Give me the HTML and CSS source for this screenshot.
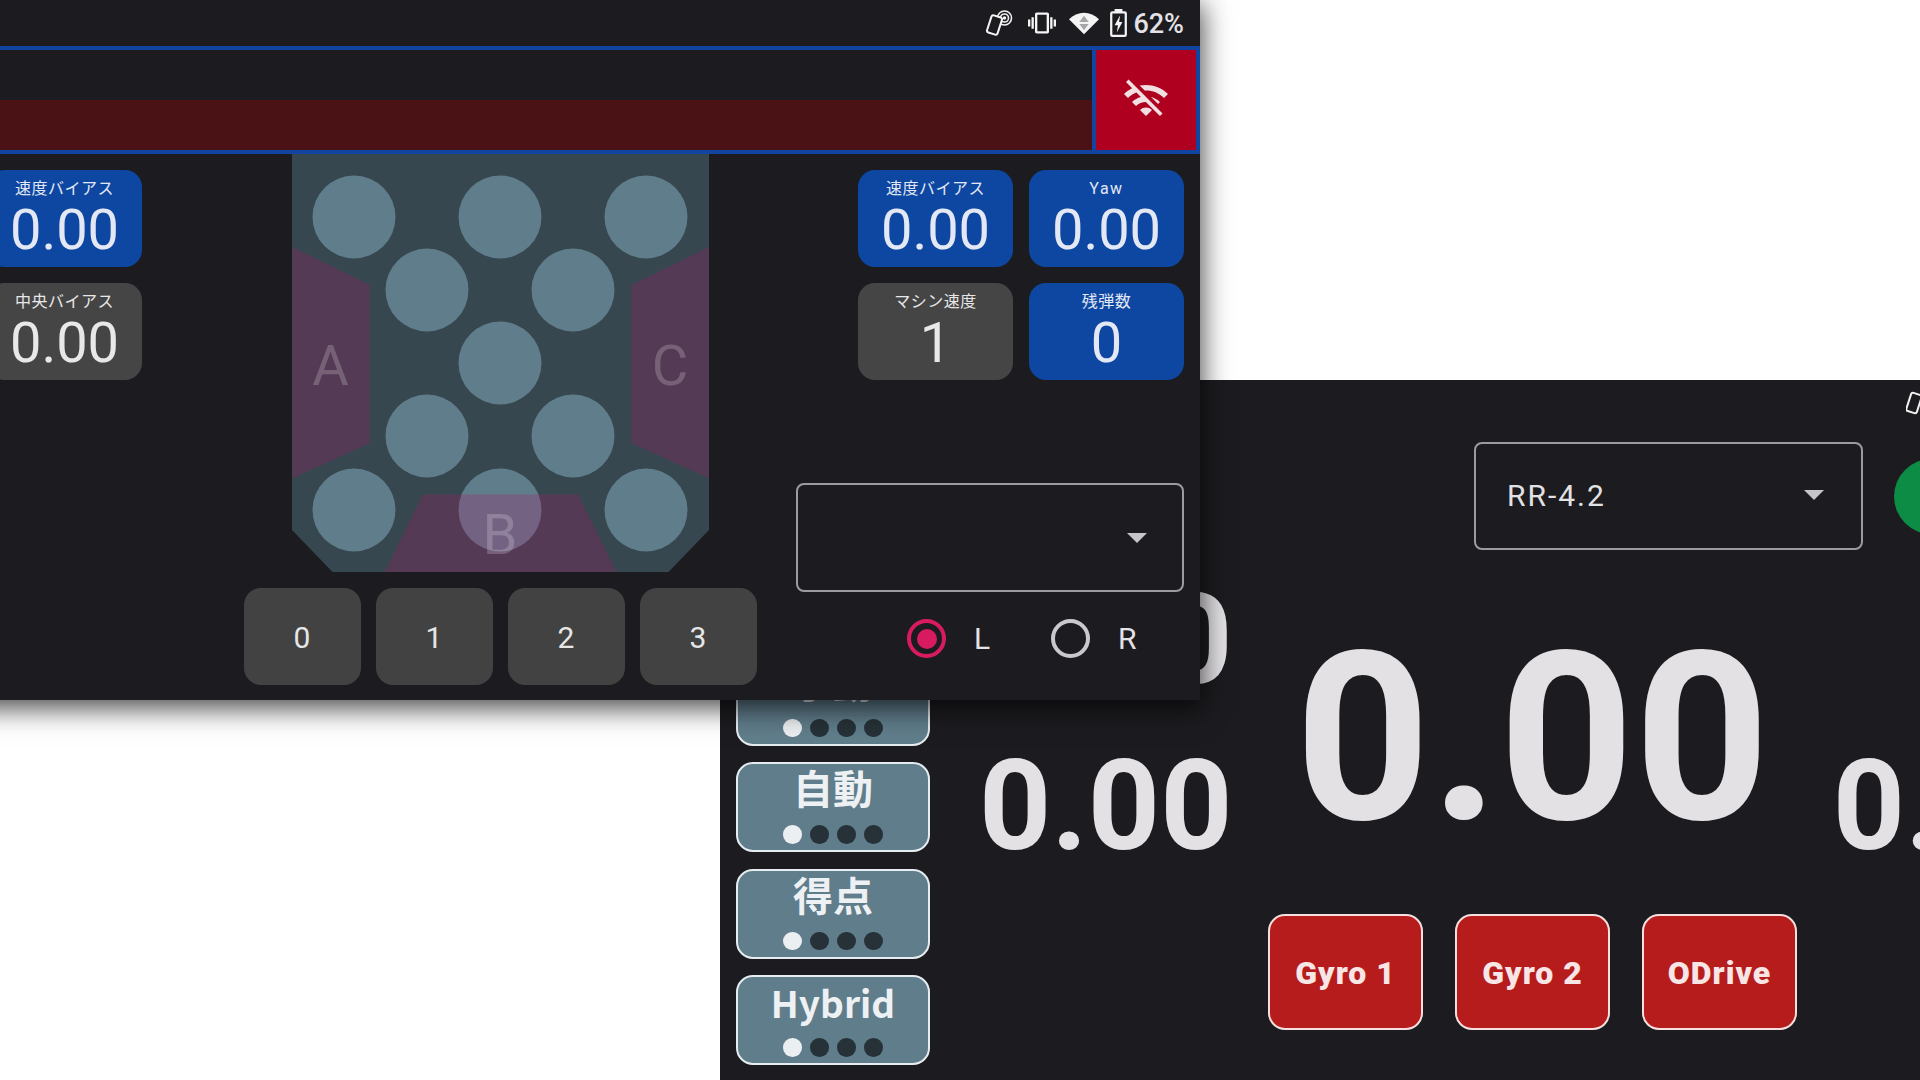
FILE: index.html
```html
<!DOCTYPE html>
<html lang="ja">
<head>
<meta charset="utf-8">
<title>Robot controller</title>
<link rel="stylesheet" href="styles.css">
</head>
<body>
<main class="desk">
  <section class="window window-back">
    <div class="status status-back">
      <svg class="ico-tap-back" viewBox="0 0 16 26"><rect x="2.5" y="3.5" width="11" height="19" rx="2" transform="rotate(18 8 13)"/></svg>
    </div>
    <div class="back-main">
      <div class="modes">
        <div class="mode"><div class="mode-title">手動</div><div class="dots"><i class="on"></i><i></i><i></i><i></i></div></div>
        <div class="mode"><div class="mode-title">自動</div><div class="dots"><i class="on"></i><i></i><i></i><i></i></div></div>
        <div class="mode"><div class="mode-title">得点</div><div class="dots"><i class="on"></i><i></i><i></i><i></i></div></div>
        <div class="mode"><div class="mode-title mode-title-latin">Hybrid</div><div class="dots"><i class="on"></i><i></i><i></i><i></i></div></div>
      </div>
      <div class="side-nums">
        <div class="num">0.00</div>
        <div class="num">0.00</div>
      </div>
      <div class="center-col">
        <div class="top-row">
          <div class="select select-back"><span class="select-value">RR-4.2</span><span class="caret"></span></div>
          <div class="led"></div>
        </div>
        <div class="mid-row">
          <div class="big-num">0.00</div>
          <div class="num num-right">0.00</div>
        </div>
        <div class="sensors">
          <div class="sensor">Gyro 1</div>
          <div class="sensor">Gyro 2</div>
          <div class="sensor">ODrive</div>
        </div>
      </div>
    </div>
  </section>

  <section class="window window-front">
    <div class="status">
      <svg class="ico-tap" viewBox="0 0 28 26">
        <circle class="ring" cx="19.5" cy="8" r="7"/>
        <circle class="ring" cx="19.5" cy="8" r="4"/>
        <circle class="dot-fill" cx="19.5" cy="8" r="1.7"/>
        <rect class="phone" x="4" y="6" width="11" height="18" rx="2" transform="rotate(18 9.5 15)"/>
      </svg>
      <svg class="ico-vib" viewBox="0 0 24 24"><path class="dot-fill" d="M0 15h2V9H0v6zm3 2h2V7H3v10zm19-8v6h2V9h-2zm-3 8h2V7h-2v10zM16.5 3h-9C6.67 3 6 3.67 6 4.5v15c0 .83.67 1.5 1.5 1.5h9c.83 0 1.5-.67 1.5-1.5v-15c0-.83-.67-1.5-1.5-1.5zM16 19H8V5h8v14z"/></svg>
      <svg class="ico-wifi" viewBox="0 0 29 21">
        <path class="dot-fill" d="M0 6.5C8-2 21-2 29 6.5L14.5 21z"/>
        <path class="wifi-arrow" d="M14.5 3l4.5 6h-9zM10 11h9l-4.5 6z"/>
      </svg>
      <svg class="ico-batt" viewBox="0 0 15 25">
        <path class="dot-fill" d="M4 0h7v3H4z"/>
        <rect class="batt-body" x="1" y="3" width="13" height="21" rx="1"/>
        <path class="dot-fill" d="M9 5.5L4 14.5h3L6 21l5-9.5H8z"/>
      </svg>
      <span class="status-text">62%</span>
    </div>
    <header class="head">
      <div class="head-left"><div class="head-band"></div></div>
      <div class="head-alert">
        <svg class="ico-wifioff" viewBox="0 0 24 24"><path d="M22.99 9C19.15 5.16 13.8 3.76 8.84 4.78l2.52 2.52c3.47-.17 6.99 1.05 9.63 3.7l2-2zm-4 4c-1.29-1.29-2.84-2.13-4.49-2.56l3.53 3.53.96-.97zM2 3.05L5.07 6.1C3.6 6.82 2.22 7.78 1 9l1.99 2c1.24-1.24 2.67-2.16 4.2-2.77l2.24 2.24C7.81 10.89 6.27 11.73 5 13v.01L6.99 15c1.36-1.36 3.14-2.04 4.92-2.06L18.98 20l1.27-1.26L3.29 1.79 2 3.05zM9 17l3 3 3-3c-1.65-1.66-4.34-1.66-6 0z"/></svg>
      </div>
    </header>
    <div class="front-main">
      <div class="col-left">
        <div class="card blue"><div class="card-label">速度バイアス</div><div class="card-value">0.00</div></div>
        <div class="card grey"><div class="card-label">中央バイアス</div><div class="card-value">0.00</div></div>
      </div>
      <div class="col-mid">
        <svg class="field" viewBox="0 0 417 418">
          <polygon class="f-base" points="0,0 417,0 417,376 376.5,418 40.5,418 0,376"/>
          <g class="f-balls">
            <circle cx="62" cy="63" r="41.5"/><circle cx="208" cy="63" r="41.5"/><circle cx="354" cy="63" r="41.5"/>
            <circle cx="135" cy="136" r="41.5"/><circle cx="281" cy="136" r="41.5"/>
            <circle cx="208" cy="209" r="41.5"/>
            <circle cx="135" cy="282" r="41.5"/><circle cx="281" cy="282" r="41.5"/>
            <circle cx="62" cy="356" r="41.5"/><circle cx="208" cy="356" r="41.5"/><circle cx="354" cy="356" r="41.5"/>
          </g>
          <g class="f-zones">
            <polygon points="0,93 78,131 78,289 0,324.5"/>
            <polygon points="417,93 339.5,131 339.5,289 417,324.5"/>
            <polygon points="131,340.6 286,340.6 324.5,418 92.5,418"/>
          </g>
          <text class="f-letter" x="38.5" y="231">A</text>
          <text class="f-letter" x="378" y="231">C</text>
          <text class="f-letter" x="208" y="400">B</text>
        </svg>
        <div class="digit-row">
          <div class="digit">0</div>
          <div class="digit">1</div>
          <div class="digit">2</div>
          <div class="digit">3</div>
        </div>
      </div>
      <div class="col-right">
        <div class="card-grid">
          <div class="card blue"><div class="card-label">速度バイアス</div><div class="card-value">0.00</div></div>
          <div class="card blue"><div class="card-label card-label-latin">Yaw</div><div class="card-value">0.00</div></div>
          <div class="card grey"><div class="card-label">マシン速度</div><div class="card-value">1</div></div>
          <div class="card blue"><div class="card-label">残弾数</div><div class="card-value">0</div></div>
        </div>
        <div class="select select-front"><span class="caret"></span></div>
        <div class="radios">
          <div class="radio-item"><span class="radio checked"></span><span class="radio-label">L</span></div>
          <div class="radio-item"><span class="radio"></span><span class="radio-label">R</span></div>
        </div>
      </div>
    </div>
  </section>
</main>
</body>
</html>
```

FILE: styles.css
```css
* { box-sizing: border-box; }
html, body { margin: 0; height: 100%; background: #fff; }
body { overflow: hidden; font-family: Roboto, "Noto Sans CJK JP", sans-serif; color: #e4e2e6; }
.desk { position: relative; width: 1920px; height: 1080px; overflow: hidden; }

.window { position: absolute; width: 1400px; height: 700px; background: #1c1c20; overflow: hidden; }
.window-back { left: 720px; top: 380px; }
.window-front { left: -200px; top: 0; overflow: visible; box-shadow: 0 6px 26px 2px rgba(0,0,0,.72); }

/* status bar */
.status { height: 46px; display: flex; align-items: center; justify-content: flex-end; padding-right: 16px; }
.status-back { justify-content: flex-start; padding: 0 0 0 1186px; }
.ico-tap { width: 28px; height: 26px; margin-right: 15px; }
.ico-vib { width: 28px; height: 28px; margin-right: 13px; }
.ico-wifi { width: 30px; height: 23px; margin-right: 11px; }
.ico-batt { width: 17px; height: 28px; margin-right: 6px; }
.ico-tap-back { width: 16px; height: 26px; fill: none; stroke: #f2f2f2; stroke-width: 2; }
.ring { fill: none; stroke: #f0f0f0; stroke-width: 1.6; }
.dot-fill { fill: #f4f4f4; }
.phone { fill: #1c1c20; stroke: #f4f4f4; stroke-width: 2; }
.wifi-arrow { fill: #a5a5a8; }
.batt-body { fill: #1c1c20; stroke: #f4f4f4; stroke-width: 2; }
.status-text { font-size: 27px; font-weight: 500; line-height: 48px; padding-top: 1px; }

/* header */
.head { height: 108px; display: flex; background: #1245a0; padding: 4px 4px 4px 0; gap: 4px; }
.head-left { flex: 1; background: #1c1c20; display: flex; align-items: flex-end; }
.head-band { width: 100%; height: 50px; background: #4b1215; }
.head-alert { width: 100px; background: #b00020; display: flex; align-items: center; justify-content: center; }
.ico-wifioff { width: 48px; height: 48px; fill: #f1dfe2; }

/* front content */
.front-main { display: grid; grid-template-columns: 1fr 514px 1fr; }
.col-left { padding: 16px 0 0 187px; display: flex; flex-direction: column; gap: 16px; }
.col-mid { display: flex; flex-direction: column; align-items: center; }
.col-right { padding: 16px 16px 0 0; display: flex; flex-direction: column; align-items: flex-end; }
.card-grid { display: grid; grid-template-columns: 155px 155px; gap: 16px; }

.card { width: 155px; height: 97px; border-radius: 17px; display: flex; flex-direction: column; align-items: center; padding-top: 7px; }
.blue { background: #0d47a1; color: #e3e8f4; }
.grey { background: #454545; color: #e8e8e8; }
.card-label { font-size: 16px; line-height: 24px; letter-spacing: .5px; }
.card-label-latin { letter-spacing: 1.5px; }
.card-value { font-size: 56px; line-height: 56px; margin-top: 1px; }

.field { width: 417px; height: 418px; display: block; flex: none; }
.f-base { fill: #37474f; }
.f-balls { fill: #607d8b; }
.f-zones { fill: rgba(175,19,107,.25); }
.f-letter { font-family: Roboto, sans-serif; font-size: 56px; font-weight: 400; fill: rgba(255,255,255,.2); text-anchor: middle; }

.digit-row { display: flex; gap: 15px; margin-top: 16px; }
.digit { width: 117px; height: 97px; border-radius: 17px; background: #424242; display: flex; align-items: center; justify-content: center; padding-top: 1px; font-size: 30px; color: #e6e6e6; }

/* selects */
.select { border: 2px solid #9c9c9f; border-radius: 8px; display: flex; align-items: center; flex: none; position: relative; }
.select-front { width: 388px; height: 109px; margin-top: 103px; justify-content: flex-end; padding-right: 35px; }
.select-back { width: 389px; height: 108px; justify-content: space-between; padding: 0 37px 2px 31px; }
.select-value { font-size: 30px; letter-spacing: 2px; color: #e2e2e4; }
.caret { width: 0; height: 0; border-left: 10px solid transparent; border-right: 10px solid transparent; border-top: 10px solid #c6c6ca; }

/* radios */
.radios { width: 388px; display: flex; padding: 27px 0 0 111px; }
.radio-item { width: 144px; flex: none; display: flex; align-items: center; gap: 28px; }
.radio { width: 39px; height: 39px; border-radius: 50%; border: 4px solid #c9c9cc; flex: none; display: flex; align-items: center; justify-content: center; }
.radio.checked { border-color: #d81b60; }
.radio.checked::after { content: ""; width: 20px; height: 20px; border-radius: 50%; background: #d81b60; }
.radio-label { font-size: 30px; color: #e4e2e6; }

/* back window */
.back-main { display: flex; height: 654px; padding-left: 16px; }
.modes { width: 194px; flex: none; display: flex; flex-direction: column; justify-content: flex-end; gap: 16.5px; padding-bottom: 15px; }
.mode { height: 90px; flex: none; background: #607d8b; border: 2px solid #e6edf0; border-radius: 17px; display: flex; flex-direction: column; align-items: center; }
.mode-title { font-family: "Noto Sans CJK JP", sans-serif; font-size: 40px; font-weight: 700; line-height: 46px; height: 50px; color: #edf1f3; }
.mode-title-latin { font-size: 37px; padding-top: 2px; }
.dots { display: flex; gap: 8.5px; margin-top: 11px; }
.dots i { width: 18.5px; height: 18.5px; border-radius: 50%; background: #263238; }
.dots i.on { background: #eceff1; }

.side-nums { margin-left: 49px; width: 249px; flex: none; padding-top: 131px; }
.num { font-size: 126px; font-weight: 700; line-height: 166px; color: #e3e1e4; white-space: nowrap; }
.center-col { margin-left: 40px; width: 640px; flex: none; display: flex; flex-direction: column; }
.top-row { margin: 16px 0 0 206px; display: flex; align-items: center; gap: 31px; }
.led { width: 75px; height: 75px; border-radius: 50%; background: #0c8c45; flex: none; }
.mid-row { height: 200px; margin-top: 89px; padding-left: 27px; display: flex; }
.big-num { font-size: 236px; font-weight: 700; line-height: 200px; color: #e3e1e4; flex: none; }
.num-right { margin: 84px 0 0 63px; }
.sensors { display: flex; gap: 32px; margin-top: 75px; }
.sensor { width: 155px; height: 116px; background: #b71c1c; border: 2px solid #f6dfdf; border-radius: 17px; display: flex; align-items: center; justify-content: center; padding-top: 2px; font-size: 32px; font-weight: 900; letter-spacing: 1px; color: #f8e6e6; }
```
